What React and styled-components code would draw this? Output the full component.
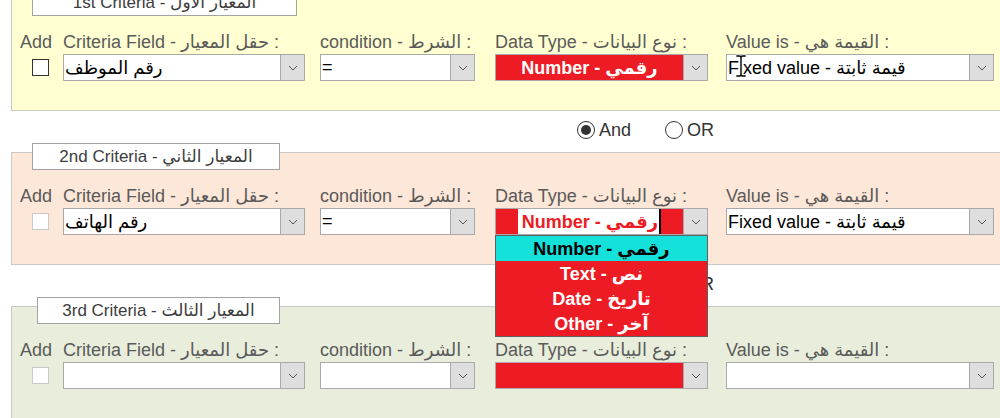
import React from "react";
import styled, { createGlobalStyle } from "styled-components";

const GlobalStyle = createGlobalStyle`
  html, body {
    margin: 0;
    padding: 0;
    background: #ffffff;
    overflow: hidden;
    font-family: "Liberation Sans", "DejaVu Sans", Arial, sans-serif;
  }
`;

const Page = styled.div`
  margin-top: -2px;
  padding-left: 11px;
  width: 1010px;
`;

const Panel = styled.div`
  background: ${(p) => p.$bg};
  border: 1px solid #c8c8c8;
  border-right: none;
  padding: 0 0 29px 8px;
`;

const Legend = styled.div`
  box-sizing: border-box;
  width: ${(p) => p.$w}px;
  height: 27px;
  margin: -10px 0 0 ${(p) => p.$x}px;
  background: #ffffff;
  border: 1px solid #a3a3a3;
  display: flex;
  align-items: center;
  justify-content: center;
  font-size: 17px;
  color: #3c3c3c;
  white-space: nowrap;
`;

const Grid = styled.div`
  display: grid;
  grid-template-columns: 43px 257px 175px 231px 268px;
  grid-template-rows: 21px 27px;
  row-gap: 1px;
  margin-top: 16px;
`;

const Label = styled.div`
  font-size: 18px;
  line-height: 21px;
  color: #5a5a5a;
  white-space: nowrap;
`;

const Checkbox = styled.div`
  box-sizing: border-box;
  width: 17px;
  height: 17px;
  margin-left: 12px;
  align-self: center;
  background: #ffffff;
  border: 1px solid ${(p) => (p.$active ? "#333333" : "#c9c9c9")};
`;

const SelectWrap = styled.div`
  position: relative;
  width: ${(p) => p.$w}px;
`;

const Select = styled.div`
  box-sizing: border-box;
  display: flex;
  height: 27px;
  border: 1px solid #a9a9a9;
  background: ${(p) => (p.$red ? "#ed1c24" : "#ffffff")};
`;

const SelectText = styled.div`
  flex: 1;
  display: flex;
  align-items: center;
  justify-content: ${(p) => (p.$red ? "center" : "flex-start")};
  padding-left: ${(p) => (p.$red ? "0" : "1px")};
  font-size: 18px;
  font-weight: ${(p) => (p.$red ? "bold" : "normal")};
  color: ${(p) => (p.$red ? "#ffffff" : "#000000")};
  white-space: nowrap;
  overflow: hidden;
`;

const Highlight = styled.span`
  display: flex;
  align-items: center;
  height: 25px;
  padding: 0 1px 0 4px;
  background: #ffffff;
  color: #ed1c24;
  border-right: 2px solid #000000;
`;

const Arrow = styled.div`
  width: 23px;
  background: #dedede;
  border-left: 1px solid #a9a9a9;
  display: flex;
  align-items: center;
  justify-content: center;
`;

const Cursor = styled.svg`
  position: absolute;
  left: 8px;
  top: 0;
  width: 14px;
  height: 24px;
`;

const DropList = styled.div`
  position: absolute;
  z-index: 10;
  left: 0;
  top: 27px;
  width: 211px;
  border: 1px solid #5f5f5f;
  background: #ed1c24;
`;

const DropItem = styled.div`
  height: 25px;
  display: flex;
  align-items: center;
  justify-content: center;
  font-size: 18px;
  font-weight: bold;
  color: ${(p) => (p.$selected ? "#000000" : "#ffffff")};
  background: ${(p) => (p.$selected ? "#14e1da" : "#ed1c24")};
  white-space: nowrap;
`;

const RadioRow = styled.div`
  height: 41px;
  display: flex;
  align-items: center;
  padding: 0 0 3px 566px;
  box-sizing: border-box;
`;

const RadioOption = styled.div`
  display: flex;
  align-items: center;
  margin-left: ${(p) => p.$gap || 0}px;
  font-size: 18px;
  color: #333333;
`;

const RadioCircle = styled.div`
  box-sizing: border-box;
  width: 18px;
  height: 18px;
  margin-right: 4px;
  border-radius: 50%;
  border: 1px solid #333333;
  background: #ffffff;
  display: flex;
  align-items: center;
  justify-content: center;

  &::after {
    content: "";
    display: ${(p) => (p.$checked ? "block" : "none")};
    width: 10px;
    height: 10px;
    border-radius: 50%;
    background: #333333;
  }
`;

const Chevron = () => (
  <svg width="10" height="6" viewBox="0 0 10 6">
    <polyline points="1,1 5,5 9,1" fill="none" stroke="#555555" strokeWidth="1" />
  </svg>
);

const IBeam = () => (
  <Cursor viewBox="0 0 14 24">
    <g fill="none" strokeLinecap="square">
      <path d="M3 2 H5.5 Q7 2 7 4 Q7 2 8.5 2 H11 M7 4 V20 M3 22 H5.5 Q7 22 7 20 Q7 22 8.5 22 H11" stroke="#ffffff" strokeWidth="3.2" />
      <path d="M3 2 H5.5 Q7 2 7 4 Q7 2 8.5 2 H11 M7 4 V20 M3 22 H5.5 Q7 22 7 20 Q7 22 8.5 22 H11" stroke="#000000" strokeWidth="1.4" />
    </g>
  </Cursor>
);

const TYPES = ["Number - رقمي", "Text - نص", "Date - تاريخ", "Other - آخر"];

const criteria = [
  {
    legend: "1st Criteria - المعيار الأول",
    bg: "#ffffd2",
    lx: 12,
    lw: 265,
    active: true,
    field: "رقم الموظف",
    cond: "=",
    type: "Number - رقمي",
    value: "Fixed value - قيمة ثابتة",
    cursor: true,
  },
  {
    legend: "2nd Criteria - المعيار الثاني",
    bg: "#fde7d8",
    lx: 12,
    lw: 248,
    field: "رقم الهاتف",
    cond: "=",
    type: "Number - رقمي",
    editing: true,
    open: true,
    value: "Fixed value - قيمة ثابتة",
  },
  {
    legend: "3rd Criteria - المعيار الثالث",
    bg: "#e9eedc",
    lx: 17,
    lw: 243,
    field: "",
    cond: "",
    type: "",
    value: "",
  },
];

const SelectBox = ({ w, red, children, extra }) => (
  <SelectWrap $w={w}>
    <Select $red={red}>
      <SelectText $red={red}>{children}</SelectText>
      <Arrow>
        <Chevron />
      </Arrow>
    </Select>
    {extra}
  </SelectWrap>
);

const Criteria = ({ c }) => (
  <Panel $bg={c.bg}>
    <Legend $x={c.lx} $w={c.lw}>{c.legend}</Legend>
    <Grid>
      <Label>Add</Label>
      <Label>Criteria Field - حقل المعيار :</Label>
      <Label>condition - الشرط :</Label>
      <Label>Data Type - نوع البيانات :</Label>
      <Label>Value is - القيمة هي :</Label>

      <Checkbox $active={c.active} />
      <SelectBox w={242}>{c.field}</SelectBox>
      <SelectBox w={155}>{c.cond}</SelectBox>
      <SelectBox
        w={213}
        red
        extra={
          c.open && (
            <DropList>
              {TYPES.map((t, i) => (
                <DropItem key={t} $selected={i === 0}>{t}</DropItem>
              ))}
            </DropList>
          )
        }
      >
        {c.editing ? <Highlight>{c.type}</Highlight> : c.type}
      </SelectBox>
      <SelectBox w={268} extra={c.cursor && <IBeam />}>{c.value}</SelectBox>
    </Grid>
  </Panel>
);

const AndOr = () => (
  <RadioRow>
    <RadioOption>
      <RadioCircle $checked />
      And
    </RadioOption>
    <RadioOption $gap={34}>
      <RadioCircle />
      OR
    </RadioOption>
  </RadioRow>
);

export default function App() {
  return (
    <>
      <GlobalStyle />
      <Page>
        {criteria.map((c, i) => (
          <React.Fragment key={c.legend}>
            <Criteria c={c} />
            {i < criteria.length - 1 && <AndOr />}
          </React.Fragment>
        ))}
      </Page>
    </>
  );
}
